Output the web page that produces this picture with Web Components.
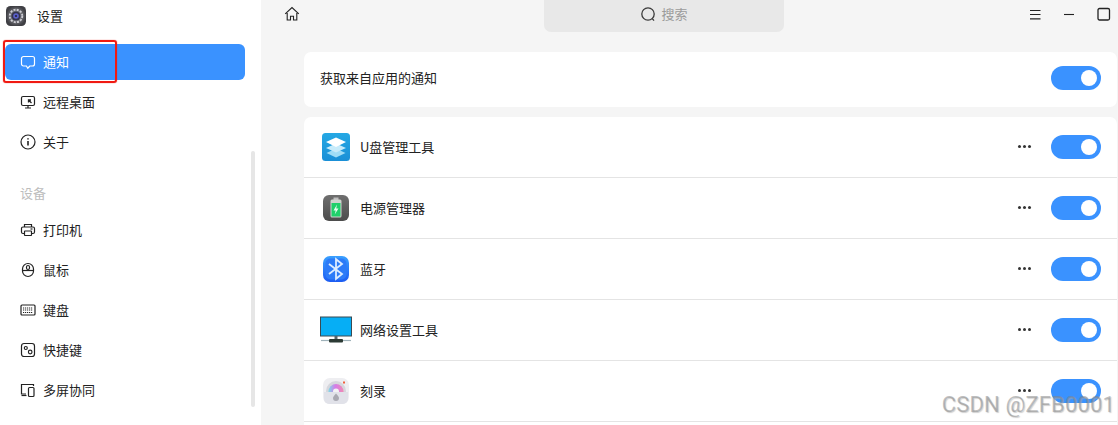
<!DOCTYPE html>
<html lang="zh">
<head>
<meta charset="utf-8">
<title>设置</title>
<style>
  html, body { margin: 0; height: 425px; overflow: hidden; }
  body { font: 13px "Noto Sans CJK SC", "Noto Sans", sans-serif; color: #222; }
</style>
</head>
<body>
<settings-app>
  <side-nav slot="side">
    <nav-item icon="chat" active>通知</nav-item>
    <nav-item icon="remote">远程桌面</nav-item>
    <nav-item icon="info">关于</nav-item>
    <nav-heading>设备</nav-heading>
    <nav-item icon="printer">打印机</nav-item>
    <nav-item icon="mouse">鼠标</nav-item>
    <nav-item icon="keyboard">键盘</nav-item>
    <nav-item icon="shortcut">快捷键</nav-item>
    <nav-item icon="screens">多屏协同</nav-item>
  </side-nav>
  <top-bar slot="top"></top-bar>
  <setting-card>
    <app-row plain>获取来自应用的通知</app-row>
  </setting-card>
  <setting-card>
    <app-row app="usb">U盘管理工具</app-row>
    <app-row app="power">电源管理器</app-row>
    <app-row app="bluetooth">蓝牙</app-row>
    <app-row app="network">网络设置工具</app-row>
    <app-row app="burn">刻录</app-row>
  </setting-card>
</settings-app>

<script>
const navIcons = {
  chat: '<path d="M3.500 2.500h9a2 2 0 0 1 2 2v5.500a2 2 0 0 1-2 2H9.800L7.800 14.200 6.400 12H3.500a2 2 0 0 1-2-2V4.500a2 2 0 0 1 2-2z"/>',
  remote: '<rect x="1.500" y="2.500" width="13" height="9" rx="1.500"/><path d="M5 14h6M8 11.500V14"/><path d="M8.500 6l3 3M8.500 8.500V6H11" stroke-width="1.300"/>',
  info: '<circle cx="8" cy="8" r="7"/><path d="M8 7v4.500" stroke-width="1.600"/><path d="M8 4.200v1.200" stroke-width="1.600"/>',
  printer: '<path d="M4.500 5V2.500h7V5"/><path d="M4.500 11.500H3A1.500 1.500 0 0 1 1.500 10V6.500A1.500 1.500 0 0 1 3 5h10a1.500 1.500 0 0 1 1.500 1.500V10a1.500 1.500 0 0 1-1.500 1.500h-1.500"/><rect x="4.500" y="9" width="7" height="4.500" rx=".5"/><path d="M10.500 7h2"/>',
  mouse: '<rect x="2.500" y="1.500" width="11" height="13" rx="5.500"/><path d="M2.800 8.500h10.400"/><rect x="6.500" y="3.500" width="3" height="4" rx="1.500"/>',
  keyboard: '<rect x="1" y="3" width="14" height="10" rx="1"/><path d="M3 6h10M3 8h10M3 10.500h10" stroke-dasharray="1.200 .8"/>',
  shortcut: '<rect x="1.500" y="1.500" width="13" height="13" rx="2.500"/><circle cx="5.800" cy="6" r="1.500"/><circle cx="10.200" cy="10" r="1.800"/>',
  screens: '<path d="M13.500 4V2.500h-12v9.500h4.500"/><path d="M1.500 13.500h5"/><rect x="8.500" y="5.500" width="5.500" height="9" rx="1"/>'
};

const appIcons = {
  usb: `<svg width="28" height="28" viewBox="0 0 28 28">
    <defs><linearGradient id="u" x1="0" y1="0" x2="0" y2="1"><stop offset="0" stop-color="#25a8e4"/><stop offset="1" stop-color="#1a8fd6"/></linearGradient></defs>
    <rect width="28" height="28" rx="3.500" fill="url(#u)"/>
    <path d="M14 15.500l9.500 4.500L14 24.500 4.500 20z" fill="#9fdcf6"/>
    <path d="M14 10.500l10 4.500-10 4.500L4 15z" fill="#c7ebfa"/>
    <path d="M14 4.500l10 4.500-10 5L4 9z" fill="#fff"/></svg>`,
  power: `<svg width="28" height="28" viewBox="0 0 28 28">
    <defs><linearGradient id="p" x1="0" y1="0" x2="0" y2="1"><stop offset="0" stop-color="#6f6f6f"/><stop offset="1" stop-color="#4c4c4c"/></linearGradient></defs>
    <rect x="1" y="1" width="26" height="26" rx="6" fill="url(#p)"/>
    <rect x="11.500" y="3.500" width="5" height="2.500" fill="#bdbdbd"/>
    <rect x="8.500" y="5.500" width="11" height="18" rx="1.500" fill="#cfd4cf"/>
    <rect x="9.500" y="9" width="9" height="13.500" fill="#1fd06a"/>
    <path d="M15 10.500l-3.500 6h2.200l-1 4 3.800-6h-2.300z" fill="#e6fff0"/></svg>`,
  bluetooth: `<svg width="28" height="28" viewBox="0 0 28 28">
    <defs><linearGradient id="b" x1="0" y1="0" x2="0" y2="1"><stop offset="0" stop-color="#3aa0ff"/><stop offset="1" stop-color="#1c5cf2"/></linearGradient></defs>
    <rect x="1" y="1" width="26" height="26" rx="7" fill="url(#b)"/>
    <rect x="3.500" y="3.500" width="21" height="21" rx="5" fill="#2c7bf8"/>
    <path d="M7 9l13 10-6 4.800V4.200l6 4.800L7 19" fill="none" stroke="#dcecff" stroke-width="1.800"/></svg>`,
  network: `<svg width="32" height="28" viewBox="0 0 32 28">
    <rect x=".5" y="1" width="31" height="19" fill="#06aef5" stroke="#3b4a52"/>
    <rect x="14.500" y="20" width="3" height="3" fill="#56656c"/>
    <path d="M1 24.500h30" stroke="#9fb2ba" stroke-width="1.200"/>
    <rect x="9" y="23" width="14" height="3.500" rx="1" fill="#2b3a34"/></svg>`,
  burn: `<svg width="28" height="28" viewBox="0 0 28 28">
    <defs><linearGradient id="c" x1="0" y1="0" x2="1" y2="0"><stop offset="0" stop-color="#7ddbe8"/><stop offset=".45" stop-color="#d67be8"/><stop offset="1" stop-color="#f08bb4"/></linearGradient></defs>
    <rect x="1" y="1" width="26" height="26" rx="7" fill="#eeeef1"/>
    <circle cx="14" cy="14" r="10" fill="#d6d6dc"/>
    <circle cx="14" cy="14.500" r="7.500" fill="url(#c)"/>
    <circle cx="14" cy="14.500" r="3" fill="#f2f2f5"/>
    <path d="M2 15h24v7a5 5 0 0 1-5 5H7a5 5 0 0 1-5-5z" fill="#e1e2e9"/>
    <path d="M14 16.500c2 2.300 3 3.300 3 4.600a3 3 0 0 1-6 0c0-1.300 1-2.300 3-4.600z" fill="#a9a9b2"/>
    <rect x="21" y="4.500" width="2" height="2" fill="#f0603c"/></svg>`
};

class SettingsApp extends HTMLElement {
  connectedCallback() {
    this.attachShadow({ mode: 'open' });
    this.shadowRoot.innerHTML = `
      <style>
        :host { display: flex; height: 425px; background: #f5f5f5; position: relative; overflow: hidden; }
        .main { flex: 1; min-width: 0; display: flex; flex-direction: column; }
        .cards { flex: none; display: flex; flex-direction: column; gap: 10px; padding-left: 43px; padding-right: 1px; }
        .mark {
          position: absolute; right: 3px; top: 392px; font: 22px Roboto, "Liberation Sans", sans-serif; letter-spacing: .15px;
          color: rgba(130, 130, 130, .5); text-shadow: 1px 1px 1px rgba(170, 170, 170, .55);
        }
      </style>
      <slot name="side"></slot>
      <div class="main">
        <slot name="top"></slot>
        <div class="cards"><slot></slot></div>
      </div>
      <div class="mark">CSDN @ZFB0001</div>
    `;
  }
}

class SideNav extends HTMLElement {
  connectedCallback() {
    this.attachShadow({ mode: 'open' });
    this.shadowRoot.innerHTML = `
      <style>
        :host { display: block; width: 261px; height: 425px; flex: none; background: #fff; position: relative; }
        .title { display: flex; align-items: center; gap: 11px; height: 32px; padding-left: 6px; margin-bottom: 12px; }
        .title span { padding-bottom: 2px; }
        .list { display: flex; flex-direction: column; gap: 4px; margin-left: 5px; width: 240px; }
        .thumb { position: absolute; left: 251px; top: 151px; width: 4px; height: 256px; border-radius: 2px; background: #e6e6e6; }
        .mark { position: absolute; left: 3px; top: 40px; width: 110px; height: 39px; border: 2px solid #f01a12; border-radius: 3px;
          box-shadow: 0 0 1px #f01a12; }
      </style>
      <div class="title">
        <svg width="20" height="20" viewBox="0 0 20 20">
          <defs><radialGradient id="g"><stop offset="0" stop-color="#aeb0b8"/><stop offset="1" stop-color="#3f3f44"/></radialGradient></defs>
          <rect width="20" height="20" rx="4.500" fill="url(#g)"/>
          <circle cx="10" cy="10" r="6.300" fill="none" stroke="#cfcfd6" stroke-width="1.800" stroke-dasharray="2 1.300"/>
          <circle cx="10" cy="10" r="4.600" fill="#33334a"/>
          <circle cx="10" cy="10" r="2.800" fill="#5a5fc8"/>
          <circle cx="10" cy="10" r="1.100" fill="#23233a"/>
        </svg>
        <span>设置</span>
      </div>
      <div class="list"><slot></slot></div>
      <div class="thumb"></div>
      <div class="mark"></div>
    `;
  }
}

class NavItem extends HTMLElement {
  connectedCallback() {
    const active = this.hasAttribute('active');
    this.attachShadow({ mode: 'open' });
    this.shadowRoot.innerHTML = `
      <style>
        :host { display: flex; align-items: center; gap: 7px; height: 36px; padding-left: 15px; border-radius: 6px;
          background: ${active ? '#3a92ff' : 'transparent'}; color: ${active ? '#fff' : '#222'}; }
        svg { fill: none; stroke: currentColor; stroke-width: 1.200; flex: none; }
        span { padding-bottom: 2px; }
      </style>
      <svg width="16" height="16" viewBox="0 0 16 16">${navIcons[this.getAttribute('icon')]}</svg>
      <span><slot></slot></span>
    `;
  }
}

class NavHeading extends HTMLElement {
  connectedCallback() {
    this.attachShadow({ mode: 'open' });
    this.shadowRoot.innerHTML = `
      <style>
        :host { display: flex; align-items: center; height: 28px; margin-top: 16px; padding-left: 15px; color: #bdbdbd; }
        span { padding-bottom: 3px; }
      </style>
      <span><slot></slot></span>
    `;
  }
}

class TopBar extends HTMLElement {
  connectedCallback() {
    this.attachShadow({ mode: 'open' });
    this.shadowRoot.innerHTML = `
      <style>
        :host { flex: none; display: grid; grid-template-columns: 283px 240px 1fr; height: 52px; align-items: start; }
        svg { fill: none; stroke: #222; stroke-width: 1.100; display: block; }
        .home { padding: 6px 0 0 23px; }
        .search { height: 28px; padding-bottom: 4px; display: flex; align-items: center; justify-content: center; gap: 5px;
          background: #e8e8e8; border-radius: 0 0 7px 7px; color: #9b9b9b; }
        .search svg { stroke: #3a3a3a; stroke-width: 1.300; }
        .search span { padding-bottom: 2px; }
        .win { display: flex; justify-content: flex-end; gap: 22px; padding: 6px 7px 0 0; align-items: center; }
      </style>
      <div class="home">
        <svg width="16" height="16" viewBox="0 0 16 16">
          <path d="M1.200 7.800L8 1.500l6.800 6.300M3.200 7v7h3.300v-3.800h3V14h3.300V7"/>
        </svg>
      </div>
      <div class="search">
        <svg width="16" height="16" viewBox="0 0 16 16"><circle cx="8" cy="8" r="6.200"/><path d="M12.300 12.600l1.700 2"/></svg>
        <span>搜索</span>
      </div>
      <div class="win">
        <svg width="12" height="16" viewBox="0 0 12 16"><path d="M1 4.500h10.500M1 8.500h10.500M1 12.900h10.500"/></svg>
        <svg width="12" height="16" viewBox="0 0 12 16"><path d="M1 8.500h10"/></svg>
        <svg width="14" height="16" viewBox="0 0 14 16" style="stroke-width:1.300"><rect x="1" y="2.500" width="11.500" height="11.500" rx="1.500"/></svg>
      </div>
    `;
  }
}

class SettingCard extends HTMLElement {
  connectedCallback() {
    this.attachShadow({ mode: 'open' });
    this.shadowRoot.innerHTML = `
      <style>
        :host { display: block; background: #fff; border-radius: 7px; overflow: hidden; }
        /* the list runs on below the window */
        :host(:last-child) { padding-bottom: 20px; }
      </style>
      <slot></slot>
    `;
  }
}

class AppRow extends HTMLElement {
  connectedCallback() {
    const plain = this.hasAttribute('plain');
    const app = this.getAttribute('app');
    this.attachShadow({ mode: 'open' });
    this.shadowRoot.innerHTML = `
      <style>
        :host { display: flex; align-items: center; height: ${plain ? '52px' : '60px'};
          padding: 0 16px ${plain ? '3px' : '0'} ${plain ? '16px' : '18px'}; ${plain ? '' : 'border-bottom: 1px solid #e4e4e4;'} }
        .icon { width: 28px; height: 28px; margin-right: 10px; display: flex; justify-content: center; flex: none; }
        .icon svg { flex: none; }
        .label { flex: 1; padding-bottom: 2px; }
        .more { display: flex; gap: 2px; margin: 0 20px 2px 0; }
        .more i { width: 3px; height: 3px; border-radius: 50%; background: #333; }
      </style>
      ${plain ? '' : `<div class="icon">${appIcons[app]}</div>`}
      <div class="label"><slot></slot></div>
      ${plain ? '' : '<div class="more"><i></i><i></i><i></i></div>'}
      <toggle-switch></toggle-switch>
    `;
  }
}

class ToggleSwitch extends HTMLElement {
  connectedCallback() {
    this.attachShadow({ mode: 'open' });
    this.shadowRoot.innerHTML = `
      <style>
        :host { display: flex; align-items: center; justify-content: flex-end; width: 50px; height: 24px; flex: none;
          padding-right: 4px; box-sizing: border-box; background: #3a92ff; border-radius: 12px; }
        i { width: 16px; height: 16px; border-radius: 50%; background: #fff; }
      </style>
      <i></i>
    `;
  }
}

customElements.define('settings-app', SettingsApp);
customElements.define('side-nav', SideNav);
customElements.define('nav-item', NavItem);
customElements.define('nav-heading', NavHeading);
customElements.define('top-bar', TopBar);
customElements.define('setting-card', SettingCard);
customElements.define('app-row', AppRow);
customElements.define('toggle-switch', ToggleSwitch);
</script>
</body>
</html>
